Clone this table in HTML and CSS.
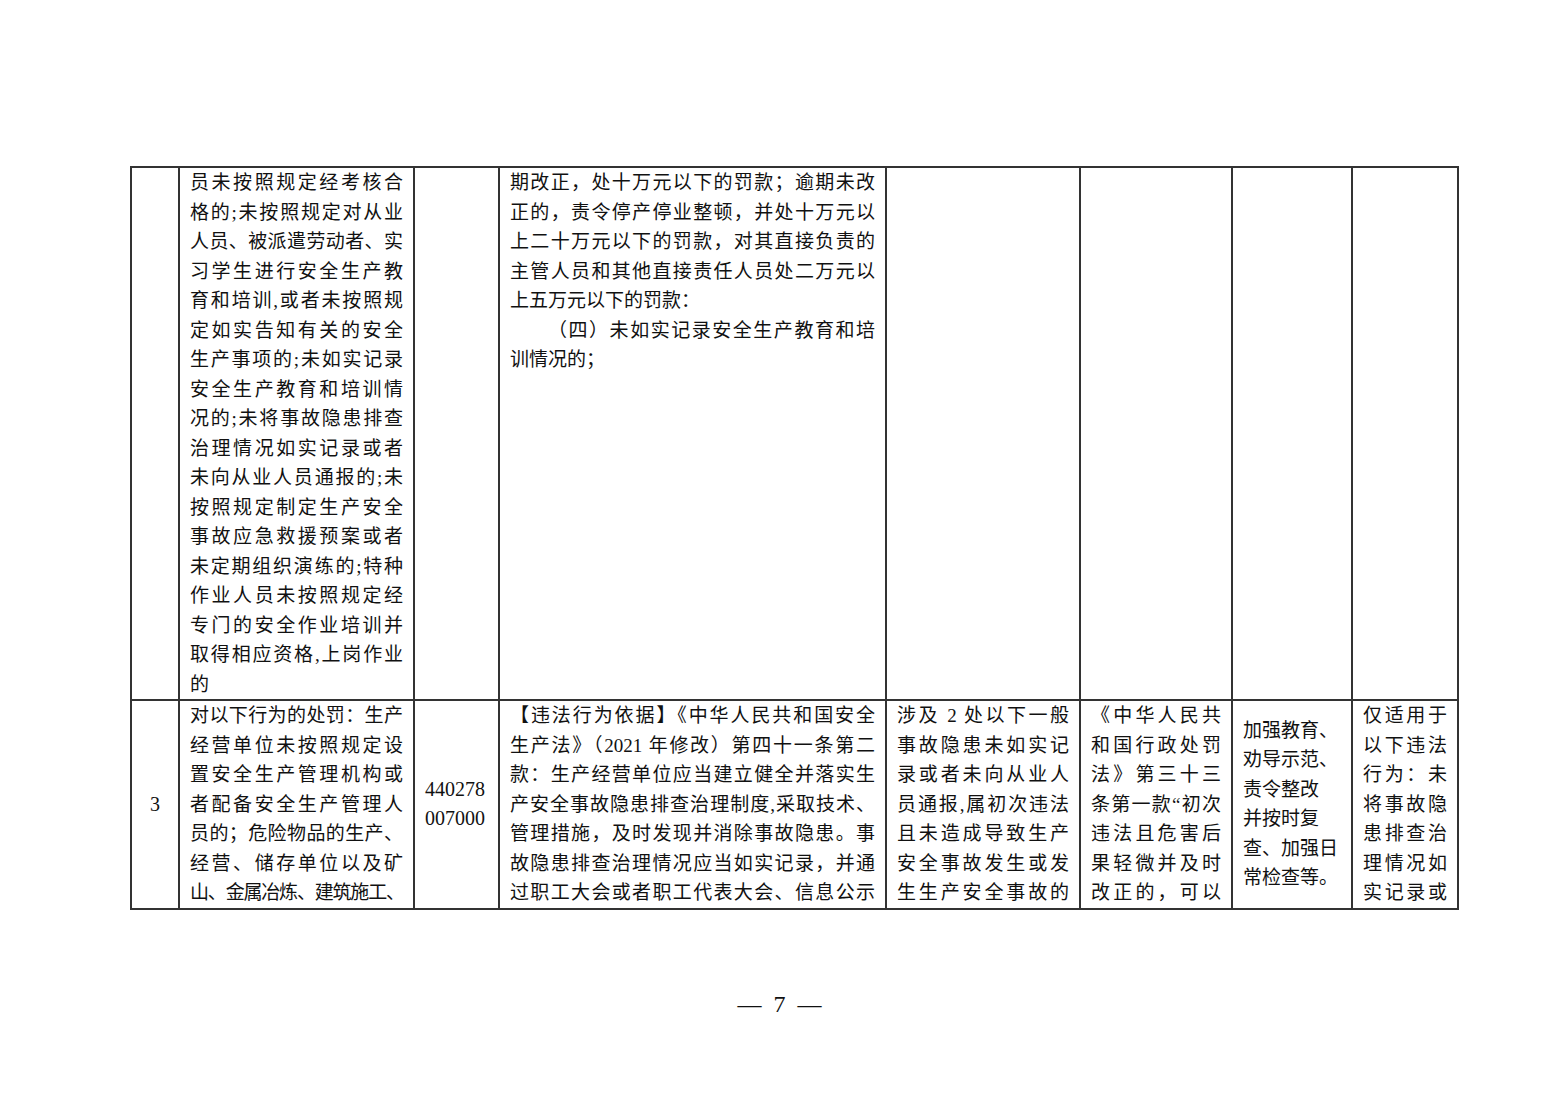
FILE: index.html
```html
<!DOCTYPE html>
<html lang="zh-CN">
<head>
<meta charset="utf-8">
<title>第7页</title>
<link rel="stylesheet" href="styles.css">
</head>
<body>
<div class="page">
  <table class="grid">
    <colgroup>
      <col class="c1"><col class="c2"><col class="c3"><col class="c4"><col class="c5"><col class="c6"><col class="c7"><col class="c8">
    </colgroup>
    <tbody>
      <tr class="r1">
        <td></td>
        <td>
          <div class="lines">
            <span>员未按照规定经考核合</span>
            <span>格的;未按照规定对从业</span>
            <span>人员、被派遣劳动者、实</span>
            <span>习学生进行安全生产教</span>
            <span>育和培训,或者未按照规</span>
            <span>定如实告知有关的安全</span>
            <span>生产事项的;未如实记录</span>
            <span>安全生产教育和培训情</span>
            <span>况的;未将事故隐患排查</span>
            <span>治理情况如实记录或者</span>
            <span>未向从业人员通报的;未</span>
            <span>按照规定制定生产安全</span>
            <span>事故应急救援预案或者</span>
            <span>未定期组织演练的;特种</span>
            <span>作业人员未按照规定经</span>
            <span>专门的安全作业培训并</span>
            <span>取得相应资格,上岗作业</span>
            <span class="last">的</span>
          </div>
        </td>
        <td></td>
        <td>
          <div class="lines">
            <span>期改正，处十万元以下的罚款；逾期未改</span>
            <span>正的，责令停产停业整顿，并处十万元以</span>
            <span>上二十万元以下的罚款，对其直接负责的</span>
            <span>主管人员和其他直接责任人员处二万元以</span>
            <span class="last">上五万元以下的罚款：</span>
            <span class="indent">（四）未如实记录安全生产教育和培</span>
            <span class="last">训情况的；</span>
          </div>
        </td>
        <td></td>
        <td></td>
        <td></td>
        <td></td>
      </tr>
      <tr class="r2">
        <td class="mid num">3</td>
        <td>
          <div class="lines">
            <span>对以下行为的处罚：生产</span>
            <span>经营单位未按照规定设</span>
            <span>置安全生产管理机构或</span>
            <span>者配备安全生产管理人</span>
            <span>员的；危险物品的生产、</span>
            <span>经营、储存单位以及矿</span>
            <span class="tight">山、金属冶炼、建筑施工、</span>
          </div>
        </td>
        <td class="mid code">440278<br>007000</td>
        <td>
          <div class="lines">
            <span>【违法行为依据】《中华人民共和国安全</span>
            <span>生产法》（2021 年修改）第四十一条第二</span>
            <span>款：生产经营单位应当建立健全并落实生</span>
            <span>产安全事故隐患排查治理制度,采取技术、</span>
            <span>管理措施，及时发现并消除事故隐患。事</span>
            <span>故隐患排查治理情况应当如实记录，并通</span>
            <span>过职工大会或者职工代表大会、信息公示</span>
          </div>
        </td>
        <td>
          <div class="lines">
            <span>涉及 2 处以下一般</span>
            <span>事故隐患未如实记</span>
            <span>录或者未向从业人</span>
            <span>员通报,属初次违法</span>
            <span>且未造成导致生产</span>
            <span>安全事故发生或发</span>
            <span>生生产安全事故的</span>
          </div>
        </td>
        <td>
          <div class="lines">
            <span>《中华人民共</span>
            <span>和国行政处罚</span>
            <span>法》第三十三</span>
            <span>条第一款“初次</span>
            <span>违法且危害后</span>
            <span>果轻微并及时</span>
            <span>改正的，可以</span>
          </div>
        </td>
        <td class="mid">
          <div class="plain">
            <span>加强教育、</span>
            <span>劝导示范、</span>
            <span>责令整改</span>
            <span>并按时复</span>
            <span>查、加强日</span>
            <span>常检查等。</span>
          </div>
        </td>
        <td>
          <div class="lines">
            <span>仅适用于</span>
            <span>以下违法</span>
            <span>行为：未</span>
            <span>将事故隐</span>
            <span>患排查治</span>
            <span>理情况如</span>
            <span>实记录或</span>
          </div>
        </td>
      </tr>
    </tbody>
  </table>
  <div class="folio">—&nbsp;&nbsp;7&nbsp;&nbsp;—</div>
</div>
</body>
</html>
```

FILE: styles.css
```css
html, body {
  margin: 0;
  padding: 0;
  background: #ffffff;
}

body {
  font-family: "Liberation Serif", "Noto Sans CJK SC", serif;
  color: #111111;
}

.page {
  width: 1559px;
  height: 1102px;
  padding-top: 166px;
  box-sizing: border-box;
  overflow: hidden;
}

.grid {
  border-collapse: collapse;
  table-layout: fixed;
  width: 1327px;
  margin-left: 130px;
}

.grid td {
  border: 2px solid #333333;
  padding: 0 10px;
  vertical-align: top;
  font-size: 19px;
  line-height: 29.5px;
}

.c1 { width: 48px; }
.c2 { width: 235px; }
.c3 { width: 85px; }
.c4 { width: 387px; }
.c5 { width: 194px; }
.c6 { width: 152px; }
.c7 { width: 120px; }
.c8 { width: 106px; }

.r1 td { height: 531px; }
.r2 td { height: 205px; }

.grid td.mid {
  vertical-align: middle;
}

.grid td.num {
  text-align: center;
  font-size: 20px;
}

.grid td.code {
  text-align: left;
  font-size: 20px;
  padding: 0 10px;
}

.lines span,
.plain span {
  display: block;
  white-space: nowrap;
}

.lines span {
  text-align: justify;
  text-align-last: justify;
}

.lines span.last {
  text-align-last: left;
}

.lines span.indent {
  padding-left: 38px;
}

.lines span.tight {
  letter-spacing: -2px;
}

.plain span {
  text-align: left;
}

.folio {
  width: 1559px;
  margin-top: 79px;
  text-align: center;
  font-size: 24px;
  line-height: 30px;
  color: #111111;
}
```
